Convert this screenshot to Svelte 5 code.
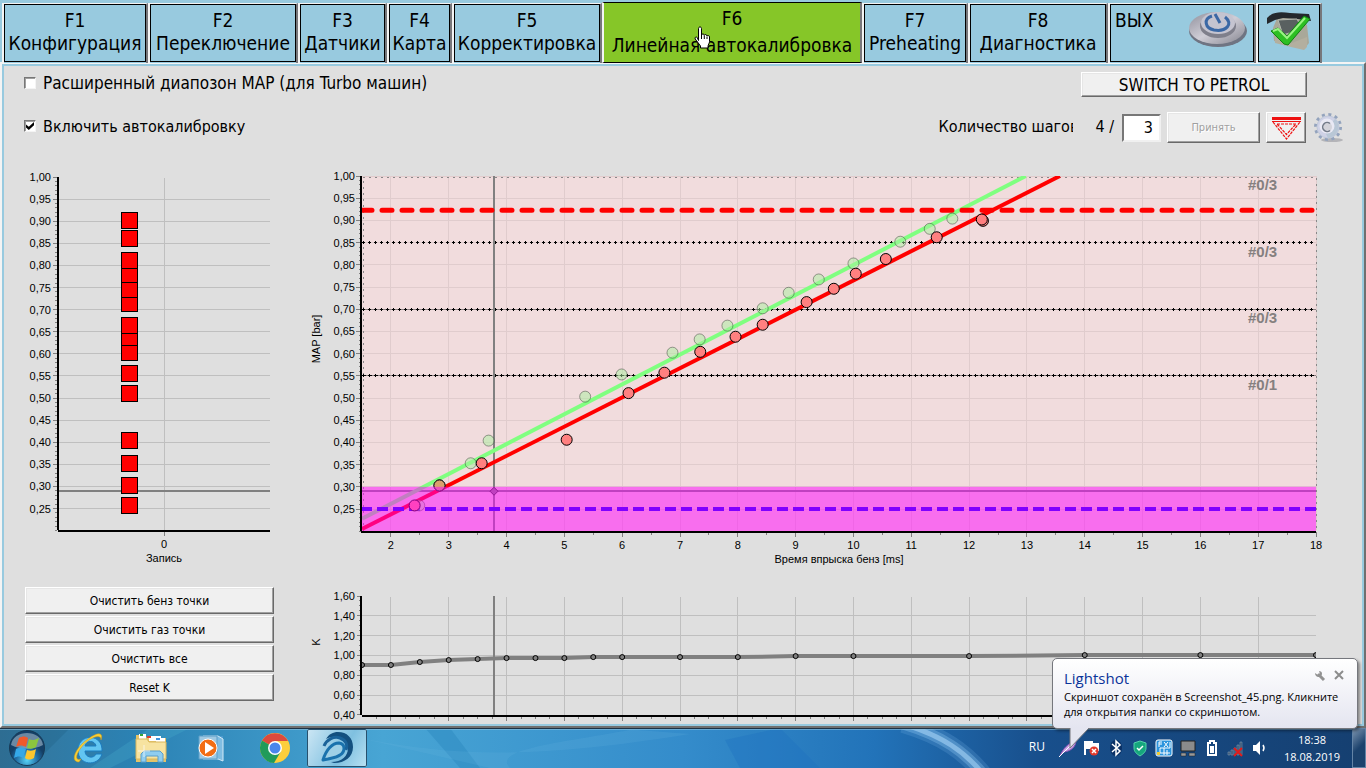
<script lang="ts">
  interface Tab {
    key: string;
    label: string;
  }

  type Point = [number, number];

  const tabs: Tab[] = [
    { key: 'F1', label: 'Конфигурация' },
    { key: 'F2', label: 'Переключение' },
    { key: 'F3', label: 'Датчики' },
    { key: 'F4', label: 'Карта' },
    { key: 'F5', label: 'Корректировка' },
    { key: 'F6', label: 'Линейная автокалибровка' },
    { key: 'F7', label: 'Preheating' },
    { key: 'F8', label: 'Диагностика' },
  ];

  const clearActions = ['Очистить бенз точки', 'Очистить газ точки', 'Очистить все', 'Reset K'];

  // [injection time ms, MAP bar]
  const gasPoints: Point[] = [
    [2.41, 0.258], [2.84, 0.303], [3.57, 0.353], [5.04, 0.406], [6.11, 0.511],
    [6.73, 0.557], [7.35, 0.604], [7.96, 0.638], [8.43, 0.665], [9.19, 0.716],
    [9.66, 0.746], [10.04, 0.78], [10.56, 0.813], [11.44, 0.862], [12.24, 0.899],
    [12.22, 0.902],
  ];

  const petrolPoints: Point[] = [
    [2.49, 0.258], [2.84, 0.303], [3.38, 0.353], [3.69, 0.404], [5.36, 0.503],
    [5.99, 0.553], [6.87, 0.602], [7.34, 0.632], [7.82, 0.663], [8.43, 0.702],
    [8.88, 0.737], [9.4, 0.767], [10, 0.803], [10.81, 0.852], [11.32, 0.881],
    [11.71, 0.904],
  ];

  const kPoints: Point[] = [
    [1.5, 0.903], [2, 0.903], [2.5, 0.933], [3, 0.953], [3.5, 0.963], [4, 0.973],
    [4.5, 0.973], [5, 0.973], [5.5, 0.983], [6, 0.983], [7, 0.983], [8, 0.983],
    [9, 0.993], [10, 0.993], [12, 0.993], [14, 1.003], [16, 1.003], [18, 1.003],
  ];

  const zones = [
    { at: 1, text: '#0/3' },
    { at: 0.85, text: '#0/3' },
    { at: 0.7, text: '#0/3' },
    { at: 0.55, text: '#0/1' },
  ];

  const current = { time: 3.79, map: 0.29 };

  const range = (from: number, to: number, step: number) =>
    Array.from({ length: Math.round((to - from) / step) + 1 }, (_, i) => from + i * step);

  const mapTicks = range(0.25, 1, 0.05);
  const mapMinor = range(0.2, 1, 0.01);
  const timeTicks = range(2, 18, 1);
  const timeMinor = range(2.5, 17.5, 1);
  const kTicks = range(0.4, 1.6, 0.2);
  const kMinor = range(0.4, 1.6, 0.05);
  const kTimeMinor = range(1.75, 17.75, 0.25);

  const fmt = (v: number) => v.toFixed(2).replace('.', ',');

  let extendedMap = $state(false);
  let autoCalibration = $state(true);
  let steps = $state('3');
  let active = $state('F6');

  let sideWidth = $state(250);
  let mainWidth = $state(1042);

  const left = 62;
  let right = $derived(mainWidth - 27);
  let sideRight = $derived(sideWidth - 4);
  let sideMid = $derived(Math.round((34 + sideRight) / 2));

  let tx = $derived((t: number) => left + ((t - 1.5) * (right - left)) / 16.5);
  const my = (v: number) => 10 + (1 - v) * 444;
  const sy = (v: number) => 11 + (1 - v) * 442;
  const ky = (v: number) => 10 + (1.6 - v) * 99;

  let cursorX = $derived(Math.round(tx(current.time)));
  let kLine = $derived(kPoints.map(([t, k]) => `${tx(t)},${ky(k)}`).join(' '));
</script>

<div class="screen">
  <nav class="tabs">
    {#each tabs as tab}
      <button class="tab" class:active={active === tab.key} onclick={() => (active = tab.key)}>
        <span class="face">
          <span>{tab.key}</span>
          <span>{tab.label}</span>
        </span>
        {#if tab.key === 'F6'}
          <svg class="pointer" width="18" height="24" viewBox="0 0 18 24" aria-hidden="true">
            <path d="M4.5 14.5V2.6c0-2.2 3-2.2 3 0V9c.4-1.600 2.700-1.400 2.800.3.500-1.300 2.600-1 2.700.7.800-1 2.500-.5 2.500 1v4.500c0 2-1.500 3-1.500 5V22H6.500v-2C5 17.500 2.500 15 1.200 13c-.8-1.700 1-2.600 2-1.500z" fill="#fff" stroke="#000" />
            <path d="M7.500 9v4M10.300 9.500V13M13 10.500V13" stroke="#000" fill="none" />
          </svg>
        {/if}
      </button>
    {/each}
    <button class="tab">
      <span class="face exit">
        <span>ВЫХ</span>
        <svg width="62" height="42" viewBox="0 0 62 42" aria-hidden="true">
          <defs>
            <linearGradient id="metal" x1="0" y1="0" x2="1" y2="1">
              <stop offset="0" stop-color="#8f8f9b" />
              <stop offset="0.5" stop-color="#cfcdd6" />
              <stop offset="1" stop-color="#85858f" />
            </linearGradient>
          </defs>
          <ellipse cx="31" cy="22" rx="29" ry="16" fill="#6f7482" />
          <ellipse cx="30" cy="19" rx="28" ry="16" fill="url(#metal)" />
          <ellipse cx="31" cy="17" rx="18" ry="12" fill="#7f7f8b" />
          <ellipse cx="31" cy="14" rx="17" ry="11" fill="#c5c4d0" />
          <path d="M25 7c-9 3-7 12 2 14 12 2 20-6 11-13" fill="none" stroke="#3b68a5" stroke-width="3" />
          <path d="M28 5l5 9" stroke="#3b68a5" stroke-width="3" />
        </svg>
      </span>
    </button>
    <button class="tab" aria-label="ECU">
      <span class="face">
        <svg width="50" height="44" viewBox="0 0 50 44" aria-hidden="true">
          <path d="M14 6l20-1 9 10 2 18-4 5-14-2-17-5-1-13z" fill="#a9a899" />
          <path d="M3 8C9 1 18 2 26 3l19 1 2 7-13-2-15-1-8 2-8 4z" fill="#24282c" />
          <path d="M14 10l19-1 5 10-19 6z" fill="#596060" stroke="#b5b8ae" />
          <path d="M11 27l12 8 20-8v10l-3 3-13-3-16-4z" fill="#b3af9f" />
          <path d="M7 21l7-3 9 8L40 6l6 3-22 26-4-1z" fill="#2dbf23" stroke="#118214" />
          <path d="M9 21l5-2 9 9L41 8" fill="none" stroke="#9bf484" stroke-width="2" />
        </svg>
      </span>
    </button>
  </nav>

  <main class="panel">
    <div class="content">
      <div class="row first">
        <label class="check">
          <input type="checkbox" bind:checked={extendedMap} />
          Расширенный диапозон MAP (для Turbo машин)
        </label>
        <button class="classic switch">SWITCH TO PETROL</button>
      </div>

      <div class="row">
        <label class="check">
          <input type="checkbox" bind:checked={autoCalibration} />
          Включить автокалибровку
        </label>
        <div class="steps">
          <label class="steps-label" for="steps">Количество шагов</label>
          <span class="count">4 /</span>
          <input id="steps" type="text" bind:value={steps} />
          <button class="classic accept" disabled>Принять</button>
          <button class="classic lower" aria-label="Down">
            <svg width="33" height="25" viewBox="0 0 33 25" aria-hidden="true">
              <path d="M2 3.500h29" stroke="#e11" stroke-width="3" />
              <path d="M2 6.500h29" stroke="#e11" />
              <path d="M3 7l13.500 17L30 7" fill="none" stroke="#e11" stroke-width="1.200" stroke-dasharray="3 1" />
              <path d="M7 9h19l-9.500 10.500z" fill="none" stroke="#e11" stroke-width="1.200" stroke-dasharray="3 1" />
            </svg>
          </button>
          <button class="gear" aria-label="Settings">
            <svg width="30" height="31" viewBox="0 0 30 31" aria-hidden="true">
              <ellipse cx="19" cy="28" rx="11" ry="2" fill="#b4b4b8" />
              <circle cx="15" cy="15" r="12.500" fill="none" stroke="#93a3bd" stroke-width="3" stroke-dasharray="3 3.540" />
              <circle cx="15" cy="15" r="11" fill="#cfd2e6" stroke="#c0c8da" />
              <path d="M22 7a11 11 0 0 1-7 19l-4-8z" fill="#b9c7d6" />
              <circle cx="14" cy="14" r="7.500" fill="#e9e9f4" />
              <circle cx="14" cy="15" r="5" fill="#d3d3da" />
              <path d="M17 11.500a4.500 4.500 0 1 0 0 7" fill="none" stroke="#727a88" stroke-width="1.500" />
            </svg>
          </button>
        </div>
      </div>

      <div class="body">
        <div class="side" bind:clientWidth={sideWidth}>
          <svg class="chart" width={sideWidth} height="410" role="img" aria-label="Запись">
            <g class="crisp">
              {#each mapTicks as v}
                {#if v < 0.99}
                  <line class="grid" x1="35" x2={sideRight} y1={sy(v)} y2={sy(v)} />
                {/if}
                <line class="tick" x1="29" x2="33" y1={sy(v)} y2={sy(v)} />
              {/each}
              {#each mapMinor as v}
                <line class="tick" x1="31" x2="33" y1={sy(v)} y2={sy(v)} />
              {/each}
              <line class="grid" x1={sideMid} x2={sideMid} y1="12" y2="364" />
              <line class="tick" x1={sideMid} x2={sideMid} y1="366" y2="370" />
              <line class="cursor" x1="35" x2={sideRight} y1={Math.round(sy(current.map))} y2={Math.round(sy(current.map))} />
              {#each gasPoints as [, v], i}
                {#if i !== 14}
                  <rect class="mark" x={sideMid - 43} y={Math.round(sy(v)) - 8} width="16" height="16" />
                {/if}
              {/each}
              <line class="axis" x1="34" x2="34" y1="11" y2="364" />
              <line class="axis" x1="34" x2={sideRight} y1="365" y2="365" />
            </g>
            {#each mapTicks as v}
              <text x="27" y={sy(v) + 4} text-anchor="end">{fmt(v)}</text>
            {/each}
            <text x={sideMid} y="382" text-anchor="middle">0</text>
            <text x={sideMid} y="396" text-anchor="middle">Запись</text>
          </svg>
          <div class="actions">
            {#each clearActions as action}
              <button class="classic">{action}</button>
            {/each}
          </div>
        </div>

        <div class="plots" bind:clientWidth={mainWidth}>
          <svg class="chart" width={mainWidth} height="410" role="img" aria-label="MAP">
            <clipPath id="plot"><rect x={left} y="10" width={right - left} height="355" /></clipPath>
            <rect class="area" x={left} y="10" width={right - left} height="355" />
            <g class="crisp">
              {#each mapTicks as v}
                <line class="soft" x1={left} x2={right} y1={my(v)} y2={my(v)} />
                <line class="tick" x1="56" x2="60" y1={my(v)} y2={my(v)} />
              {/each}
              {#each mapMinor as v}
                <line class="tick" x1="59" x2="61" y1={my(v)} y2={my(v)} />
              {/each}
              {#each timeTicks as t}
                <line class="soft" x1={tx(t)} x2={tx(t)} y1="10" y2="364" />
                <line class="tick" x1={tx(t)} x2={tx(t)} y1="366" y2="371" />
              {/each}
              {#each timeMinor as t}
                <line class="tick" x1={tx(t)} x2={tx(t)} y1="366" y2="369" />
              {/each}
              <path class="frame" d="M{left + 1} 365V11H{right}V365" />
              {#each zones as zone}
                {#if zone.at < 1}
                  {#if zone.at < 0.8}
                    <line class="zone-fill" x1={left} x2={right} y1={my(zone.at)} y2={my(zone.at)} />
                  {/if}
                  <line class="zone" class:dense={zone.at < 0.6} x1={left} x2={right} y1={my(zone.at)} y2={my(zone.at)} />
                  <line class="zone-dot" x1={left} x2={right} y1={my(zone.at)} y2={my(zone.at)} />
                {/if}
              {/each}
            </g>
            {#each zones as zone}
              <text class="zone-text" x={right - 68} y={my(zone.at) + 14}>{zone.text}</text>
            {/each}

            <g clip-path="url(#plot)">
              <line class="cursor" x1={left} x2={right} y1={Math.round(my(current.map))} y2={Math.round(my(current.map))} />
              <line class="cursor" x1={cursorX} x2={cursorX} y1="10" y2="365" />
              <line class="trend petrol" x1={tx(1.5)} y1={my(0.228)} x2={tx(12.98)} y2={my(1)} />
              <line class="trend" x1={tx(1.5)} y1={my(0.205)} x2={tx(13.57)} y2={my(1)} />
              <line class="limit" x1={left} x2={right} y1={my(0.923)} y2={my(0.923)} />
              <line class="idle" x1={left} x2={right} y1={my(0.25)} y2={my(0.25)} />
              {#each petrolPoints as [t, v]}
                <circle class="petrol-point" cx={tx(t)} cy={my(v)} r="5.500" />
              {/each}
              {#each gasPoints as [t, v]}
                <circle class="gas" cx={tx(t)} cy={my(v)} r="5.500" />
              {/each}
              <circle class="shared" cx={tx(2.84)} cy={my(0.303)} r="5.500" />
              <path class="diamond" d="M{cursorX} {my(current.map) - 4}l4 4-4 4-4-4z" />
              <rect class="band" x={left} y={my(0.3)} width={right - left} height="45" />
            </g>

            <g class="crisp">
              <line class="axis" x1="61" x2="61" y1="10" y2="365" />
              <line class="axis" x1="61" x2={right} y1="366" y2="366" />
            </g>
            {#each mapTicks as v}
              <text x="55" y={my(v) + 4} text-anchor="end">{fmt(v)}</text>
            {/each}
            {#each timeTicks as t}
              <text x={tx(t)} y="383" text-anchor="middle">{t}</text>
            {/each}
            <text x={(left + right) / 2} y="397" text-anchor="middle">Время впрыска бенз [ms]</text>
            <text transform="translate(20 173) rotate(-90)" text-anchor="middle">MAP [bar]</text>
          </svg>

          <svg class="chart" width={mainWidth} height="138" role="img" aria-label="K">
            <clipPath id="kplot"><rect x={left} y="10" width={right - left} height="120" /></clipPath>
            <g class="crisp">
              {#each kTicks as v}
                {#if v > 0.5 && v < 1.5}
                  <line class="grid" x1={left} x2={right} y1={ky(v)} y2={ky(v)} />
                {/if}
                <line class="tick" x1="57" x2="61" y1={ky(v)} y2={ky(v)} />
              {/each}
              {#each kMinor as v}
                <line class="tick" x1="59" x2="61" y1={ky(v)} y2={ky(v)} />
              {/each}
              {#each timeTicks as t}
                {#if t < 18}
                  <line class="grid" x1={tx(t)} x2={tx(t)} y1="11" y2="129" />
                {/if}
                <line class="tick" x1={tx(t)} x2={tx(t)} y1="131" y2="135" />
              {/each}
              {#each kTimeMinor as t}
                <line class="tick" x1={tx(t)} x2={tx(t)} y1="131" y2="133" />
              {/each}
              <line class="cursor" x1={cursorX} x2={cursorX} y1="10" y2="130" />
            </g>
            <g clip-path="url(#kplot)">
              <polyline class="k-line" points={kLine} />
              {#each kPoints as [t, v]}
                <circle class="k-point" cx={tx(t)} cy={ky(v)} r="2.500" />
              {/each}
            </g>
            <g class="crisp">
              <line class="axis" x1="61" x2="61" y1="10" y2="129" />
              <line class="axis" x1="62" x2={right} y1="130" y2="130" />
            </g>
            {#each kTicks as v}
              <text x="55" y={ky(v) + 4} text-anchor="end">{fmt(v)}</text>
            {/each}
            <text transform="translate(20 56) rotate(-90)" text-anchor="middle">K</text>
          </svg>
        </div>
      </div>
    </div>
  </main>

  <footer class="taskbar">
    <svg class="aurora" viewBox="0 0 1366 40" preserveAspectRatio="none" aria-hidden="true">
      <defs>
        <linearGradient id="sky">
          <stop offset="0" stop-color="#35759a" />
          <stop offset="0.1" stop-color="#2b82b4" />
          <stop offset="0.28" stop-color="#48a5d4" />
          <stop offset="0.5" stop-color="#348ccb" />
          <stop offset="0.64" stop-color="#2273b9" />
          <stop offset="0.76" stop-color="#184f8c" />
          <stop offset="1" stop-color="#153f70" />
        </linearGradient>
      </defs>
      <rect width="1366" height="40" fill="url(#sky)" />
      <path d="M0 0h70L30 40H0z" fill="#1d5c80" opacity="0.300" />
      <path d="M90 40L150 0h40l-80 40z" fill="#4cb3ce" opacity="0.250" />
      <path d="M425 0h25l30 40h-20z" fill="#2884bb" opacity="0.400" />
      <path d="M360 10c100 20 180 20 330-4L610 0h30c-70 14-150 20-130 40l-20 0z" fill="#70bde6" opacity="0.150" />
      <path d="M725 12l15 28h80l-40-40z" fill="#1c70c0" opacity="0.350" />
      <path d="M903 -4c40 12 62 28 80 50" fill="none" stroke="#7db9ea" stroke-width="18" opacity="0.200" />
      <path d="M903 -4c40 12 62 28 80 50" fill="none" stroke="#8cc5f2" stroke-width="11" opacity="0.350" />
      <path d="M903 -4c40 12 62 28 80 50" fill="none" stroke="#a6d4f6" stroke-width="5" opacity="0.600" />
      <path d="M0 .5h1366" stroke="#1c3347" />
      <path d="M0 1.500h1366" stroke="#8dc0dd" opacity="0.600" />
    </svg>

    <div class="apps">
      <button class="app start" aria-label="Start">
        <svg width="38" height="38" viewBox="0 0 38 38">
          <defs>
            <radialGradient id="orb" cy="0.850">
              <stop offset="0" stop-color="#57d3f7" />
              <stop offset="0.6" stop-color="#236fa6" />
              <stop offset="1" stop-color="#143f66" />
            </radialGradient>
          </defs>
          <circle cx="19" cy="19" r="17.500" fill="url(#orb)" stroke="#173a56" />
          <path d="M3 16C5 0 33 0 35 16c-10 5-22 5-32 0z" fill="#d5e5ee" opacity="0.450" />
          <path d="M11 9c4-2 6-2 9 0l-2 9c-4-2-6-2-10 0z" fill="#f0592b" />
          <path d="M21 10c3 2 6 1 10-1l-3 9c-3 2-6 2-9 1z" fill="#8bc63e" />
          <path d="M8 20c4-2 6-2 10 0l-3 9c-3-2-5-2-9 0z" fill="#35a8e8" />
          <path d="M19 21c3 1 6 1 9-1l-2 9c-4 2-6 2-9 0z" fill="#fdc62f" />
        </svg>
      </button>
      <button class="app" aria-label="Internet Explorer">
        <svg width="34" height="34" viewBox="0 0 34 34">
          <path fill-rule="evenodd" d="M30 20H13c0 7 9 8 11 3h6c-4 13-24 12-24-4C6 2 31 2 30 20zM13 15h11c-1-6-10-6-11 0z" fill="#62c5f2" stroke="#1b7cc0" />
          <path d="M7 31C-3 31 4 16 16 8 24 2 32 0 29 9 29 3 22 6 17 9 6 17 0 31 9 28z" fill="#f8cf35" stroke="#d29b14" stroke-width="0.500" />
        </svg>
      </button>
      <button class="app" aria-label="Explorer">
        <svg width="34" height="34" viewBox="0 0 34 34">
          <path d="M2 8V4h9l2 3h19v24H2z" fill="#e5c368" />
          <path d="M5 3h7v5H5zM15 5h12v5H15zM22 7h9v5h-9z" fill="#fff" />
          <path d="M6 3h3v2H6z" fill="#35a53b" />
          <path d="M13 5h4v2h-4z" fill="#e23d2e" />
          <path d="M22 7h4v2h-4z" fill="#3f93dc" />
          <path d="M2 8h11l2 3h17v17H2z" fill="#f7e3a0" stroke="#d9b75c" />
          <path d="M7 31v-8l3-3h16l3 3v8h-5v-6H12v6z" fill="#8fcdf0" stroke="#5b9ecb" />
          <path d="M10 14v12M4 20h12" stroke="#fff" opacity="0.700" />
        </svg>
      </button>
      <button class="app" aria-label="Media Player">
        <svg width="32" height="30" viewBox="0 0 32 30">
          <path d="M9 3h17v23H9z" fill="#4c9bcf" />
          <path d="M6 3h15l5 3v22l-5-2H6z" fill="#80bde2" stroke="#d2e9f7" />
          <path d="M2 3h18v23H2z" fill="#9fc9e3" stroke="#5d9ec8" />
          <circle cx="11" cy="15" r="9" fill="#f26d14" stroke="#fff" />
          <path d="M8 9l9 6-9 6z" fill="#fff" />
        </svg>
      </button>
      <button class="app" aria-label="Chrome">
        <svg width="32" height="32" viewBox="0 0 32 32">
          <circle cx="16" cy="16" r="15" fill="#fdce3c" />
          <path d="M16 16L3 8.500A15 15 0 0 1 29 9H16z" fill="#dc4a3d" />
          <path d="M16 16L3 8.500A15 15 0 0 0 15 31l6.500-11z" fill="#219b5a" />
          <circle cx="16" cy="16" r="7" fill="#fff" />
          <circle cx="16" cy="16" r="5.500" fill="#4a86ec" />
        </svg>
      </button>
      <button class="app running" aria-label="Calibration">
        <svg width="34" height="34" viewBox="0 0 34 34">
          <path d="M6 8C9 3 13 1 18 1c9 0 15 6 15 15 0 10-8 16-19 16l-3-1c11 0 17-6 17-14C28 7 16 3 6 8z" fill="#14507f" />
          <path d="M3 29C6 19 12 12 19 12c7 1 6 9 1 12-4 3-9 3-12 4z" fill="#9fd0e6" stroke="#1a72ad" stroke-width="3" stroke-linejoin="round" />
          <path d="M4 15C7 8 14 5 20 7c6 2 8 7 6 12" fill="none" stroke="#1a6299" stroke-width="3" />
        </svg>
      </button>
    </div>

    <div class="tray">
      <span class="lang">RU</span>
      <svg viewBox="0 0 24 24"><path d="M4 20C7 12 12 8 20 4c0 7-5 11-12 12z" fill="#c9a1e2" stroke="#8b55b5" /><path d="M3 21L16 8" stroke="#fff" /></svg>
      <svg viewBox="0 0 24 24"><path d="M5 5v14" stroke="#fff" stroke-width="2" /><path d="M6 5h7v2h6v8h-7v-2H6z" fill="#fff" /><circle cx="14" cy="15" r="4.500" fill="#e23a2c" /><path d="M12 13l4 4M16 13l-4 4" stroke="#fff" stroke-width="1.500" /></svg>
      <svg viewBox="0 0 24 24"><ellipse cx="12" cy="12" rx="6" ry="8" fill="#0a3166" /><path d="M8 8l8 7-4 4V5l4 4-8 7" fill="none" stroke="#fff" stroke-width="1.500" /></svg>
      <svg viewBox="0 0 24 24"><path d="M12 5l6 2v5c0 4-3 6-6 8-3-2-6-4-6-8V7z" fill="#16a77d" stroke="#55d2ab" /><path d="M9 12l2 2 4-4" fill="none" stroke="#fff" stroke-width="1.500" /></svg>
      <svg viewBox="0 0 24 24"><rect x="4" y="4" width="16" height="16" rx="2" fill="#2c94dd" stroke="#fff" /><path d="M10 6H7v5M7 8h3M12 6l4 5M16 6l-4 5M18 6v6H8v5h10M12 12v7M15 14v5" fill="none" stroke="#fff" /><path d="M5 16h3v3H5z" fill="#f3cc33" /></svg>
      <svg viewBox="0 0 24 24"><path d="M5 5h14v10H5z" fill="#8b8b8b" stroke="#222" /><path d="M5 17h5v3H5zM13 17h6v3h-6z" fill="#999" stroke="#222" stroke-width="0.500" /></svg>
      <svg viewBox="0 0 24 24"><path d="M10 5h4v2h2v12H8V7h2z" fill="none" stroke="#fff" stroke-width="2" /><path d="M10 10h4v7h-4z" fill="#fff" /></svg>
      <svg viewBox="0 0 24 24"><path d="M4 16h2v3H4zM7 14h2v5H7zM10 12h2v7h-2zM13 9h2v10h-2zM16 6h2v13h-2z" fill="#314f70" stroke="#8ea4b9" stroke-width="0.500" /><path d="M10 12l8 8M18 12l-8 8" stroke="#e11b1b" stroke-width="2" /></svg>
      <svg viewBox="0 0 24 24"><path d="M5 9h3l4-4v14l-4-4H5z" fill="#fff" /><path d="M15 9q2 3 0 6" fill="none" stroke="#fff" stroke-width="1.500" /></svg>
      <time class="clock">18:38<br />18.08.2019</time>
      <button class="desktop" aria-label="Show desktop"></button>
    </div>

    <aside class="balloon">
      <header>
        <h2>Lightshot</h2>
        <div class="tools">
          <button aria-label="Options">
            <svg width="12" height="12" viewBox="0 0 12 12"><path d="M4 4l6 6" stroke="#929292" stroke-width="3" /><path d="M1 3c0 4 4 5 6 3s1-5-2-5l1 3-2 1z" fill="#929292" /></svg>
          </button>
          <button aria-label="Close">
            <svg width="10" height="10" viewBox="0 0 10 10"><path d="M1 1l8 8M9 1L1 9" stroke="#8c8c8c" stroke-width="2" /></svg>
          </button>
        </div>
      </header>
      <p>Скриншот сохранён в Screenshot_45.png. Кликните для открытия папки со скриншотом.</p>
      <svg class="tail" width="22" height="22" viewBox="0 0 22 22" aria-hidden="true">
        <path d="M1 0v20L20 0" fill="#e4e5f0" stroke="#75777d" />
      </svg>
    </aside>
  </footer>
</div>

<style>
  :global(body) {
    margin: 0;
  }

  .screen {
    min-height: 100vh;
    display: flex;
    flex-direction: column;
    background: #98cadf;
    font-family: 'DejaVu Sans Condensed', 'DejaVu Sans', sans-serif;
    font-size: 16px;
    color: #000;
  }

  button,
  input {
    font: inherit;
    color: inherit;
    margin: 0;
    padding: 0;
    box-sizing: border-box;
    border-radius: 0;
  }

  /* function key tabs */
  .tabs {
    display: grid;
    grid-template-columns: 146px 150px 89px 65px 150px 260px 106px 140px 148px 66px;
    height: 59px;
    padding: 3px 0 0 2px;
  }

  .tab {
    position: relative;
    display: flex;
    border: solid;
    border-width: 1px 2px 0 2px;
    border-color: #f4f4f4 #77777b #f4f4f4 #f4f4f4;
    padding-bottom: 1px;
    background: #98cadf;
    font-size: 19px;
    line-height: 23px;
    white-space: nowrap;
  }

  .face {
    flex: 1;
    display: flex;
    flex-direction: column;
    align-items: center;
    justify-content: center;
    border: 1px solid #000;
    padding-bottom: 3px;
    min-width: 0;
  }

  .tab.active {
    background: #86c628;
    height: 61px;
    margin-top: -1px;
    border-top-color: #000;
    border-bottom: 1px solid #000;
    line-height: 27px;
    z-index: 1;
  }

  .tab.active .face {
    border: 0;
    padding: 0;
  }

  .exit {
    flex-direction: row;
    justify-content: space-between;
    align-items: flex-start;
    padding: 4px;
  }

  .pointer {
    position: absolute;
    left: 90px;
    top: 23px;
  }

  /* main panel */
  .panel {
    flex: 1;
    display: flex;
    border: 2px solid;
    border-color: #f4f4f4 #6f6f6f #6f6f6f #f4f4f4;
    padding: 2px;
  }

  .content {
    flex: 1;
    min-width: 0;
    background: #dfdfdf;
    padding: 6px 19px 0 20px;
  }

  .row {
    display: flex;
    align-items: center;
    justify-content: space-between;
    height: 31px;
    margin-bottom: 23px;
  }

  .row.first {
    height: 25px;
    margin-bottom: 15px;
    padding-right: 36px;
    font-size: 17px;
  }

  .check {
    display: flex;
    align-items: center;
    gap: 7px;
    padding-bottom: 3px;
  }

  .check input {
    appearance: none;
    width: 12px;
    height: 12px;
    background: #fff;
    border: 1px solid;
    border-color: #777 #f4f4f4 #f4f4f4 #777;
    box-shadow: inset 1px 1px #a0a0a0;
  }

  .check input:checked::before {
    content: '';
    display: block;
    width: 8px;
    height: 8px;
    margin: 1px;
    background: #000;
    clip-path: polygon(0 30%, 35% 60%, 100% 0, 100% 40%, 35% 100%, 0 70%);
  }

  .classic {
    background: #f0f0f0;
    border: 1px solid;
    border-color: #fff #696969 #696969 #fff;
    box-shadow:
      inset -1px -1px #a0a0a0,
      inset 1px 1px #e6e6e6;
  }

  .switch {
    width: 226px;
    height: 25px;
  }

  .steps {
    display: flex;
    align-items: center;
  }

  .steps-label {
    width: 135px;
    overflow: hidden;
    white-space: nowrap;
    padding-bottom: 3px;
  }

  .count {
    padding: 0 8px 3px 22px;
  }

  .steps input {
    width: 39px;
    height: 28px;
    padding-right: 6px;
    text-align: right;
    background: #fff;
    border: 2px solid;
    border-color: #777 #f0f0f0 #f0f0f0 #777;
    margin-right: 6px;
  }

  .accept {
    width: 93px;
    height: 31px;
    margin-right: 6px;
    font-size: 11px;
    color: #a0a0a0;
    text-shadow: 1px 1px #fff;
  }

  .lower {
    display: grid;
    place-items: center;
    width: 40px;
    height: 31px;
    margin-right: 7px;
  }

  .gear {
    display: flex;
    border: 0;
    background: none;
  }

  .body {
    display: grid;
    grid-template-columns: 250px minmax(0, 1fr);
    column-gap: 26px;
  }

  .side,
  .plots {
    display: flex;
    flex-direction: column;
    gap: 10px;
    min-width: 0;
  }

  .actions {
    display: flex;
    flex-direction: column;
    gap: 2px;
    padding: 1px 0 0 1px;
  }

  .actions button {
    height: 27px;
    font-size: 12px;
  }

  /* charts */
  .chart {
    display: block;
    font-family: 'Liberation Sans', Arial, sans-serif;
    font-size: 11px;
  }

  .crisp {
    shape-rendering: crispEdges;
  }

  .grid {
    stroke: #bfbfbf;
  }

  .soft {
    stroke: #e0cccd;
  }

  .tick {
    stroke: #808080;
  }

  .axis {
    stroke: #000;
    stroke-width: 2;
  }

  .cursor {
    stroke: #808080;
    stroke-width: 2;
    shape-rendering: crispEdges;
  }

  .mark {
    fill: #f00;
    stroke: #000;
  }

  .area {
    fill: #f1dcdd;
  }

  .frame {
    fill: none;
    stroke: #888;
    stroke-dasharray: 2 4;
  }

  .zone {
    stroke: #000;
    stroke-dasharray: 3 3;
  }

  .zone.dense {
    stroke-dasharray: 4 2;
  }

  .zone-fill {
    stroke: #8a8080;
  }

  .zone-dot {
    stroke: #000;
    stroke-width: 3;
    stroke-dasharray: 1 5;
    stroke-dashoffset: -1;
  }

  .zone-text {
    font-size: 15px;
    font-weight: 700;
    fill: #858080;
  }

  .trend {
    stroke: #f00;
    stroke-width: 4;
  }

  .trend.petrol {
    stroke: #80ff80;
  }

  .limit {
    stroke: #f00;
    stroke-width: 5;
    stroke-linecap: round;
    stroke-dasharray: 10 10;
  }

  .idle {
    stroke: #00f;
    stroke-width: 4;
    stroke-dasharray: 11 5;
    stroke-dashoffset: 1;
  }

  .gas {
    fill: #ff8080;
    stroke: #000;
  }

  .petrol-point {
    fill: rgba(170, 240, 160, 0.5);
    stroke: rgba(60, 70, 60, 0.5);
  }

  .shared {
    fill: #dba06c;
    stroke: #222;
  }

  .diamond {
    fill: #808080;
    stroke: #303030;
  }

  .band {
    fill: rgba(255, 0, 255, 0.5);
  }

  .k-line {
    fill: none;
    stroke: #808080;
    stroke-width: 4;
  }

  .k-point {
    fill: #808080;
    stroke: #000;
  }

  /* taskbar */
  .taskbar {
    position: relative;
    display: flex;
    justify-content: space-between;
    height: 40px;
    font-family: 'Open Sans', 'Noto Sans', sans-serif;
  }

  .aurora {
    position: absolute;
    inset: 0;
    width: 100%;
    height: 100%;
  }

  .apps,
  .tray {
    position: relative;
    display: flex;
  }

  .app {
    display: grid;
    place-items: center;
    width: 62px;
    border: 0;
    background: none;
  }

  .app.start {
    width: 58px;
    padding-right: 4px;
  }

  .app.running {
    width: 60px;
    margin: 1px;
    border: 1px solid #e9f6fd;
    border-radius: 2px;
    background: linear-gradient(120deg, #cbe6f4, #7fc0e0 60%, #b7e0f2);
    outline: 1px solid #27516e;
    outline-offset: -1px;
  }

  .tray {
    align-items: center;
    color: #fff;
    font-size: 11px;
  }

  .tray svg {
    width: 24px;
    height: 24px;
  }

  .lang {
    margin-right: 11px;
    padding-bottom: 4px;
    font-size: 12px;
  }

  .clock {
    width: 80px;
    text-align: center;
    line-height: 17px;
  }

  .desktop {
    align-self: stretch;
    width: 14px;
    border: 1px solid #6484a6;
    background: linear-gradient(135deg, #7b93ae, #1c426d 50%);
  }

  .balloon {
    position: absolute;
    right: 8px;
    bottom: 39px;
    width: 306px;
    height: 71px;
    box-sizing: border-box;
    padding: 9px 8px 0 11px;
    border: 1px solid #75777d;
    border-radius: 5px;
    background: linear-gradient(#fff, #e4e5f0);
    box-shadow: 2px 2px 3px rgba(0, 0, 0, 0.4);
    font-size: 11px;
    line-height: 15px;
  }

  .balloon header {
    display: flex;
    justify-content: space-between;
    height: 21px;
  }

  .balloon h2 {
    margin: 0;
    font-size: 15px;
    line-height: 21px;
    font-weight: 400;
    color: #0a3399;
  }

  .balloon p {
    margin: 0;
  }

  .tools {
    display: flex;
    align-items: flex-start;
    gap: 8px;
    padding: 2px 5px 0 0;
  }

  .tools button {
    display: flex;
    border: 0;
    background: none;
  }

  .tail {
    position: absolute;
    left: 16px;
    top: 69px;
  }
</style>
